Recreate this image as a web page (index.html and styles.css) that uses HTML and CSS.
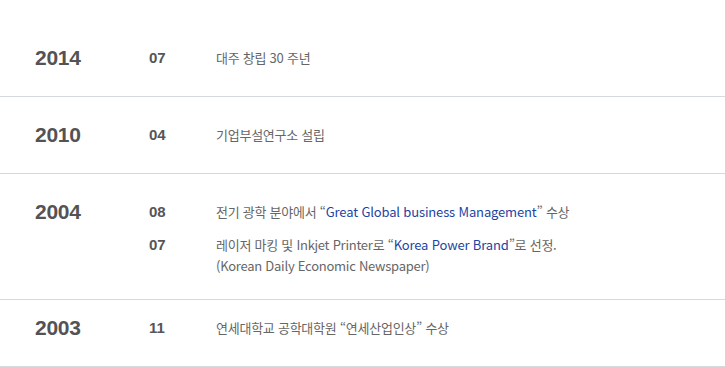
FILE: index.html
```html
<!DOCTYPE html>
<html lang="ko">
<head>
<meta charset="utf-8">
<title>History</title>
<link rel="stylesheet" href="styles.css">
</head>
<body>
<div class="history">
  <div class="row">
    <div class="year">2014</div>
    <div class="items">
      <div class="item"><div class="month">07</div><div class="text">대주 창립 30 주년</div></div>
    </div>
  </div>
  <div class="row">
    <div class="year">2010</div>
    <div class="items">
      <div class="item"><div class="month">04</div><div class="text">기업부설연구소 설립</div></div>
    </div>
  </div>
  <div class="row row--multi">
    <div class="year">2004</div>
    <div class="items">
      <div class="item"><div class="month">08</div><div class="text">전기 광학 분야에서 “<span class="hl">Great Global business Management</span>” 수상</div></div>
      <div class="item"><div class="month">07</div><div class="text">레이저 마킹 및 <span class="lat">Inkjet Printer</span>로 “<span class="hl">Korea Power Brand</span>”로 선정.<br><span class="lat">(Korean Daily Economic Newspaper)</span></div></div>
    </div>
  </div>
  <div class="row row--last">
    <div class="year">2003</div>
    <div class="items">
      <div class="item"><div class="month">11</div><div class="text">연세대학교 공학대학원 “연세산업인상” 수상</div></div>
    </div>
  </div>
</div>
</body>
</html>
```
FILE: styles.css
```css
html, body {
  margin: 0;
  padding: 0;
  background: #fff;
}
.history {
  padding-top: 20px;
}
.row {
  display: flex;
  padding: 26px 0 26px 35px;
  border-bottom: 1px solid #d6dadd;
}
.row--multi {
  padding-bottom: 23px;
}
.row--last {
  padding-top: 16px;
}
.year {
  width: 114px;
  flex: none;
  font-family: "Liberation Sans", Arial, sans-serif;
  font-weight: bold;
  font-size: 21px;
  line-height: 24px;
  color: #535356;
  letter-spacing: -0.3px;
}
.items {
  display: flex;
  flex-direction: column;
  gap: 9px;
}
.item {
  display: flex;
  align-items: flex-start;
}
.month {
  width: 67px;
  flex: none;
  font-family: "Liberation Sans", Arial, sans-serif;
  font-weight: bold;
  font-size: 15px;
  line-height: 24px;
  color: #555558;
}
.text {
  padding-top: 1px;
  font-family: "Noto Sans CJK KR", "Noto Sans", sans-serif;
  font-size: 13px;
  line-height: 21px;
  letter-spacing: -0.25px;
  color: #666;
}
.lat {
  letter-spacing: -0.25px;
}
.hl {
  color: #1d44a3;
  letter-spacing: -0.15px;
}
```
